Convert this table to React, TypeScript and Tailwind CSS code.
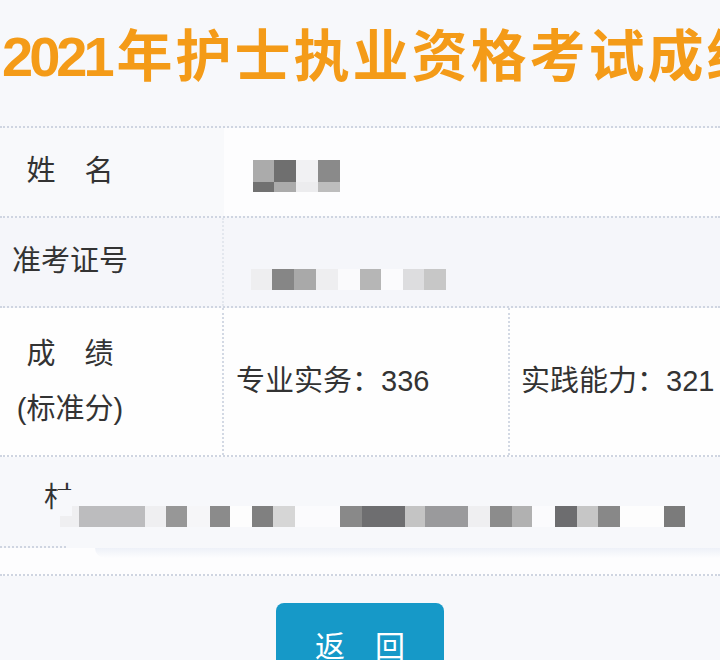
import React from 'react';

const FONT = { fontFamily: '"Liberation Sans", "Noto Sans CJK SC", sans-serif' };

type Seg = [number, string];

/** A strip of mosaic blocks standing in for blurred-out personal data. */
function Mosaic({ segs, h }: { segs: Seg[]; h: number }) {
  return (
    <div className="flex" style={{ height: h }}>
      {segs.map(([w, c], i) => (
        <div key={i} style={{ width: w, background: c }} className="shrink-0" />
      ))}
    </div>
  );
}

const nameTop: Seg[] = [
  [21, '#ababab'],
  [22, '#6f6f6f'],
  [22, '#f1f1f3'],
  [22, '#8a8a8a'],
];
const nameBottom: Seg[] = [
  [21, '#717171'],
  [22, '#ababab'],
  [22, '#ececee'],
  [22, '#bdbdbd'],
];
const ticket: Seg[] = [
  [21, '#eeeef0'],
  [22, '#868686'],
  [22, '#a9a9a9'],
  [22, '#eeeef0'],
  [22, '#fafafc'],
  [21, '#b6b6b6'],
  [22, '#fbfbfd'],
  [21, '#dddddf'],
  [22, '#c7c7c7'],
];
const school: Seg[] = [
  [19, '#efeff1'],
  [66, '#bcbcbe'],
  [21, '#efeff1'],
  [21, '#979797'],
  [23, '#f6f6f8'],
  [20, '#8b8b8b'],
  [22, '#fdfdfd'],
  [21, '#808080'],
  [22, '#d6d6d6'],
  [45, '#fbfbfd'],
  [22, '#898989'],
  [43, '#6e6e70'],
  [20, '#c4c4c4'],
  [43, '#9a9a9c'],
  [22, '#efeff1'],
  [22, '#8c8c8c'],
  [20, '#b1b1b1'],
  [23, '#fbfbfd'],
  [22, '#6d6d6f'],
  [21, '#c6c6c6'],
  [22, '#888888'],
  [44, '#fdfdfd'],
  [21, '#7b7b7b'],
];

export default function App() {
  return (
    <div
      className="h-[660px] w-[720px] overflow-hidden bg-[#f7f8fb] text-[#333]"
      style={FONT}
    >
      {/* Title */}
      <h1 className="mt-[29px] whitespace-nowrap pl-[2px] text-[56px] font-bold leading-none text-[#f49b18]">
        <span className="tracking-[-4px]">2021</span>
        <span className="ml-[6px] tracking-[3px]">年护士执业资格考试成绩</span>
      </h1>

      {/* Result table */}
      <div className="mt-[41px] border-t-2 border-dotted border-[#cfd5e1]">
        {/* 姓名 */}
        <div className="flex h-[90px] border-b-2 border-dotted border-[#cfd5e1]">
          <div className="flex w-[224px] items-center bg-[#f8f9fb]">
            <div className="w-[140px] text-center text-[29px]">姓　名</div>
          </div>
          <div className="flex flex-1 items-center bg-[#fdfdfe] pl-[29px] pt-[8px]">
            <div>
              <Mosaic segs={nameTop} h={22} />
              <Mosaic segs={nameBottom} h={10} />
            </div>
          </div>
        </div>

        {/* 准考证号 */}
        <div className="flex h-[90px] border-b-2 border-dotted border-[#cfd5e1] bg-[#f5f6fa]">
          <div className="flex w-[224px] items-center border-r-2 border-dotted border-[#e3e7ee]">
            <div className="w-[140px] text-center text-[29px]">准考证号</div>
          </div>
          <div className="flex flex-1 items-center pl-[27px] pt-[34px]">
            <Mosaic segs={ticket} h={21} />
          </div>
        </div>

        {/* 成绩 */}
        <div className="flex h-[149px] border-b-2 border-dotted border-[#cfd5e1] bg-[#fefefe]">
          <div className="flex w-[224px] items-center border-r-2 border-dotted border-[#d3d9e4]">
            <div className="w-[140px] text-center text-[29px] leading-[55px]">
              <div>成　绩</div>
              <div>(标准分)</div>
            </div>
          </div>
          <div className="flex w-[286px] items-center border-r-2 border-dotted border-[#d3d9e4] pl-[12px] text-[29px]">
            专业实务：336
          </div>
          <div className="flex flex-1 items-center whitespace-nowrap pl-[11px] text-[29px]">
            实践能力：321
          </div>
        </div>

        {/* 学校 (blurred) */}
        <div className="h-[89px] bg-[#f7f8fb] pl-[44px] pt-[27px]">
          <div className="flex items-start">
            <span className="relative text-[28px] leading-none">
              村
              <span className="absolute right-0 top-[6px] h-[26px] w-[14px] bg-[#f7f8fb]" />
            </span>
            <div className="-ml-[12px] mt-[22px] bg-[#fbfbfd]">
              <Mosaic segs={school} h={21} />
            </div>
          </div>
        </div>
        <div className="flex h-[2px]">
          <div className="w-[66px] border-b-2 border-dotted border-[#cfd5e1]" />
        </div>
        <div className="h-[28px] border-b-2 border-dotted border-[#cfd5e1] bg-[#fdfdfe] pl-[95px]">
          <div className="h-[10px] rounded-bl-[20px] bg-gradient-to-b from-[#eef1f8] to-[#fdfdfe]" />
        </div>
      </div>

      {/* Back button */}
      <div className="mt-[27px] flex justify-center">
        <button
          type="button"
          className="h-[86px] w-[168px] rounded-[8px] bg-[#1699c8] text-[30px] text-white"
        >
          返　回
        </button>
      </div>
    </div>
  );
}
